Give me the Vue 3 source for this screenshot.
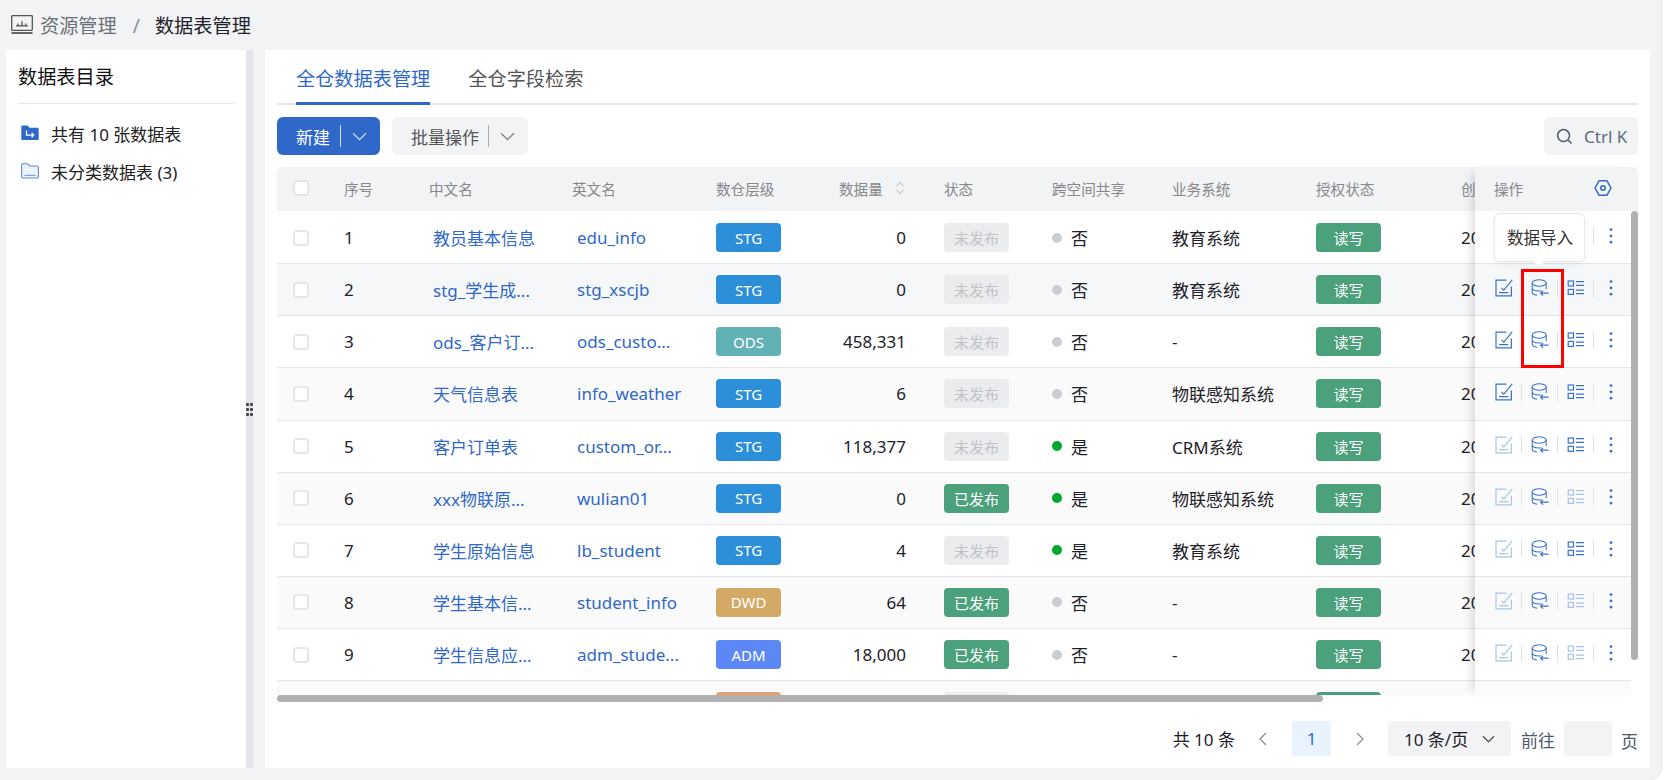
<script setup>
import { ref } from 'vue'

const activeTab = ref(0)
const tabs = ['全仓数据表管理', '全仓字段检索']

const headers = [
  { label: '' },
  { label: '序号' },
  { label: '中文名' },
  { label: '英文名' },
  { label: '数仓层级' },
  { label: '数据量', sort: true },
  { label: '状态' },
  { label: '跨空间共享' },
  { label: '业务系统' },
  { label: '授权状态' },
  { label: '创建时间' }
]

const rows = [
  { id: 1, cn: '教员基本信息', en: 'edu_info', tier: 'STG', count: '0', published: false, shared: false, biz: '教育系统', edit: true, list: true },
  { id: 2, cn: 'stg_学生成...', en: 'stg_xscjb', tier: 'STG', count: '0', published: false, shared: false, biz: '教育系统', edit: true, list: true },
  { id: 3, cn: 'ods_客户订...', en: 'ods_custo...', tier: 'ODS', count: '458,331', published: false, shared: false, biz: '-', edit: true, list: true },
  { id: 4, cn: '天气信息表', en: 'info_weather', tier: 'STG', count: '6', published: false, shared: false, biz: '物联感知系统', edit: true, list: true },
  { id: 5, cn: '客户订单表', en: 'custom_or...', tier: 'STG', count: '118,377', published: false, shared: true, biz: 'CRM系统', edit: false, list: true },
  { id: 6, cn: 'xxx物联原...', en: 'wulian01', tier: 'STG', count: '0', published: true, shared: true, biz: '物联感知系统', edit: false, list: false },
  { id: 7, cn: '学生原始信息', en: 'lb_student', tier: 'STG', count: '4', published: false, shared: true, biz: '教育系统', edit: false, list: true },
  { id: 8, cn: '学生基本信...', en: 'student_info', tier: 'DWD', count: '64', published: true, shared: false, biz: '-', edit: false, list: false },
  { id: 9, cn: '学生信息应...', en: 'adm_stude...', tier: 'ADM', count: '18,000', published: true, shared: false, biz: '-', edit: false, list: false },
  { id: 10, cn: '', en: '', tier: 'DM', count: '', published: false, shared: false, biz: '', edit: false, list: false }
]
</script>

<template>
  <div class="page">
    <!-- 面包屑 -->
    <div class="breadcrumb">
      <svg class="crumb-icon" viewBox="0 0 22 20" fill="none" stroke="#555" stroke-width="1.3">
        <rect x="0.7" y="0.7" width="20.6" height="14.6" rx="0.5" />
        <path d="M5 10.8h12M7.2 10.5V8.6M11 10.5V6.2M14.8 10.5V8.6" />
        <path d="M0.5 18h21" stroke-width="1.8" />
      </svg>
      <span class="crumb-parent">资源管理</span>
      <span class="crumb-sep">/</span>
      <span class="crumb-current">数据表管理</span>
    </div>

    <div class="content">
      <!-- 左侧目录 -->
      <aside class="sidebar">
        <div class="sidebar-title">数据表目录</div>
        <div class="tree-item">
          <svg class="folder" viewBox="0 0 18 16">
            <path d="M1.5 0.5h5l2 2.2h8a1.2 1.2 0 0 1 1.2 1.2v10a1.2 1.2 0 0 1-1.2 1.2h-15a1.2 1.2 0 0 1-1.2-1.2V1.7a1.2 1.2 0 0 1 1.2-1.2z" fill="#2f68c8" />
            <path d="M5.5 5.5v4.6h7M10.6 8l2.1 2.1-2.1 2.1" fill="none" stroke="#fff" stroke-width="1.3" />
          </svg>
          <span>共有 10 张数据表</span>
        </div>
        <div class="tree-item">
          <svg class="folder" viewBox="0 0 18 16">
            <path d="M1.8 0.8h4.8l2 2.2h7.6a1.2 1.2 0 0 1 1.2 1.2v9.6a1.2 1.2 0 0 1-1.2 1.2H1.8a1.2 1.2 0 0 1-1.2-1.2V2a1.2 1.2 0 0 1 1.2-1.2z" fill="#eef3fb" stroke="#5f8ed6" stroke-width="1.1" />
            <path d="M3.5 12.3h11" stroke="#5f8ed6" stroke-width="1" />
          </svg>
          <span>未分类数据表 (3)</span>
        </div>
      </aside>

      <!-- 拖拽条 -->
      <div class="splitter">
        <div class="splitter-bar">
          <div class="grip">
            <i v-for="n in 6" :key="n"></i>
          </div>
        </div>
      </div>

      <!-- 主区域 -->
      <main class="main">
        <div class="tabs">
          <div
            v-for="(tab, i) in tabs"
            :key="tab"
            class="tab"
            :class="{ active: activeTab === i }"
            @click="activeTab = i"
          >
            {{ tab }}
          </div>
        </div>

        <div class="toolbar">
          <button class="btn btn-primary">
            <span class="btn-label">新建</span>
            <span class="btn-line"></span>
            <svg class="btn-arrow" viewBox="0 0 14 8" fill="none" stroke="currentColor" stroke-width="1.2"><path d="M1 1l6 6 6-6" /></svg>
          </button>
          <button class="btn btn-gray">
            <span class="btn-label">批量操作</span>
            <span class="btn-line"></span>
            <svg class="btn-arrow" viewBox="0 0 14 8" fill="none" stroke="currentColor" stroke-width="1.2"><path d="M1 1l6 6 6-6" /></svg>
          </button>
          <div class="search">
            <svg class="search-icon" viewBox="0 0 18 18" fill="none" stroke="#4e5969" stroke-width="1.6">
              <circle cx="8" cy="8" r="6.3" />
              <path d="M12.8 12.8l3.6 3.6" />
            </svg>
            <span>Ctrl K</span>
          </div>
        </div>

        <div class="table">
          <div class="table-inner">
            <!-- 可滚动部分 -->
            <div class="table-left">
              <div class="grid-row head">
                <div v-for="(h, i) in headers" :key="i" class="th">
                  <span v-if="i === 0" class="checkbox"></span>
                  <template v-else>{{ h.label }}</template>
                  <svg v-if="h.sort" class="sort" viewBox="0 0 10 14" fill="none" stroke="#c9cdd4" stroke-width="1.1">
                    <path d="M1.5 5L5 1.5 8.5 5M1.5 9L5 12.5 8.5 9" />
                  </svg>
                </div>
              </div>
              <div class="table-body">
                <div
                  v-for="(row, idx) in rows"
                  :key="row.id"
                  class="grid-row data"
                  :class="{ stripe: idx % 2 === 1, hovered: idx === 1 }"
                >
                  <div class="td"><span class="checkbox"></span></div>
                  <div class="td seq">{{ row.id }}</div>
                  <div class="td link cn">{{ row.cn }}</div>
                  <div class="td link en">{{ row.en }}</div>
                  <div class="td"><span class="tag" :class="'tier-' + row.tier">{{ row.tier }}</span></div>
                  <div class="td num">{{ row.count }}</div>
                  <div class="td">
                    <span class="tag" :class="row.published ? 'tag-green' : 'tag-off'">{{ row.published ? '已发布' : '未发布' }}</span>
                  </div>
                  <div class="td share">
                    <i class="dot" :class="{ on: row.shared }"></i>
                    <span>{{ row.shared ? '是' : '否' }}</span>
                  </div>
                  <div class="td">{{ row.biz }}</div>
                  <div class="td"><span class="tag tag-green">读写</span></div>
                  <div class="td">2023-10-12 10:00</div>
                </div>
              </div>
            </div>

            <!-- 固定操作列 -->
            <div class="table-fixed">
              <div class="fixed-head">
                <span>操作</span>
                <svg class="gear" viewBox="0 0 18 18" fill="none" stroke="#2f68c8" stroke-width="1.5">
                  <path d="M5 1.8h8L17 9l-4 7.2H5L1 9z" stroke-linejoin="round" />
                  <circle cx="9" cy="9" r="2.2" />
                </svg>
              </div>
              <div class="fixed-body">
                <div class="fixed-rows">
                  <div
                    v-for="(row, idx) in rows"
                    :key="row.id"
                    class="op-row"
                    :class="{ stripe: idx % 2 === 1, hovered: idx === 1 }"
                  >
                    <div class="op">
                      <svg class="op-icon" :class="{ light: !row.edit }" viewBox="0 0 18 18" fill="none" stroke="currentColor" stroke-width="1.2">
                        <path d="M11.5 1.2H1v15.6h15.4V7.5" />
                        <path d="M6.6 8.8l2.2 2.4L17.2 0.8M4.2 13.7h9" />
                      </svg>
                      <i class="op-line"></i>
                    </div>
                    <div class="op">
                      <svg class="op-icon" viewBox="0 0 18 18" fill="none" stroke="currentColor" stroke-width="1.05">
                        <ellipse cx="8.2" cy="4" rx="7" ry="3.2" />
                        <path d="M1.2 4v9c0 1.7 2.2 2.9 5 3.2M1.2 8.8c0 1.8 3.1 3.1 7 3.1 .8 0 1.6-.1 2.3-.2M15.2 4v6" />
                        <path d="M17.6 14.2H9.6M12 11.8l-2.4 2.4 2.4 2.4" stroke-width="1.2" />
                      </svg>
                      <i class="op-line"></i>
                    </div>
                    <div class="op">
                      <svg class="op-icon" :class="{ light: !row.list }" viewBox="0 0 18 18" fill="none" stroke="currentColor" stroke-width="1.2">
                        <rect x="1.2" y="2" width="5.3" height="5" />
                        <rect x="1.2" y="10.4" width="5.3" height="5" />
                        <path d="M9 2.7h8M9 6.3h8M9 11.1h8M9 14.7h8" />
                      </svg>
                      <i class="op-line"></i>
                    </div>
                    <div class="op">
                      <svg class="op-icon" viewBox="0 0 18 18" fill="currentColor">
                        <circle cx="8" cy="2.6" r="1.4" />
                        <circle cx="8" cy="8.9" r="1.4" />
                        <circle cx="8" cy="15.2" r="1.4" />
                      </svg>
                    </div>
                  </div>
                </div>
                <div class="vtrack"><div class="vthumb"></div></div>
              </div>

              <!-- 提示 -->
              <div class="tooltip">数据导入</div>
              <!-- 红框标注 -->
              <div class="red-box"></div>
            </div>
          </div>
          <div class="hbar"><div class="hthumb"></div></div>
        </div>

        <!-- 分页 -->
        <div class="pager">
          <span class="total">共 10 条</span>
          <svg class="pg-arrow" viewBox="0 0 8 14" fill="none" stroke="#86909c" stroke-width="1.3"><path d="M7 1L1 7l6 6" /></svg>
          <span class="pg-num">1</span>
          <svg class="pg-arrow" viewBox="0 0 8 14" fill="none" stroke="#86909c" stroke-width="1.3"><path d="M1 1l6 6-6 6" /></svg>
          <div class="pg-size">
            <span>10 条/页</span>
            <svg viewBox="0 0 14 8" fill="none" stroke="#4e5969" stroke-width="1.4"><path d="M1 1l6 6 6-6" /></svg>
          </div>
          <span class="pg-goto">前往</span>
          <span class="pg-input"></span>
          <span class="pg-unit">页</span>
        </div>
      </main>
    </div>
  </div>
</template>

<style scoped>
.page {
  width: 1662px;
  height: 780px;
  box-sizing: border-box;
  display: flex;
  flex-direction: column;
  background: #f2f3f5;
  border-right: 1px solid #e2e3e7;
  border-bottom-right-radius: 12px;
  font-family: "Noto Sans", "Noto Sans CJK SC", sans-serif;
  font-size: 17px;
  color: #1d2129;
}

/* 面包屑 */
.breadcrumb {
  height: 50px;
  flex: none;
  display: flex;
  align-items: center;
  padding-left: 11px;
  font-size: 19.2px;
}

.crumb-icon {
  width: 22px;
  height: 20px;
  margin-right: 7px;
}

.crumb-parent {
  color: #6b6f76;
}

.crumb-sep {
  color: #86909c;
  margin: 0 15px 0 16px;
}

.crumb-current {
  color: #1d2129;
}

.content {
  flex: 1;
  min-height: 0;
  display: flex;
  padding: 0 11px 12px 6px;
}

/* 左侧目录 */
.sidebar {
  width: 240px;
  flex: none;
  box-sizing: border-box;
  background: #fff;
  padding: 0 12px;
}

.sidebar-title {
  height: 54px;
  box-sizing: border-box;
  padding-top: 13px;
  line-height: 28px;
  font-size: 19.2px;
  color: #111;
  border-bottom: 1px solid #e5e6eb;
  margin-bottom: 10px;
}

.tree-item {
  height: 38px;
  display: flex;
  align-items: center;
  padding-left: 3px;
  color: #222;
}

.folder {
  width: 18px;
  height: 16px;
  margin-right: 12px;
  flex: none;
}

/* 拖拽条 */
.splitter {
  width: 19px;
  flex: none;
}

.splitter-bar {
  width: 7px;
  height: 100%;
  background: #e4e5ea;
  display: flex;
  align-items: center;
}

.grip {
  display: grid;
  grid-template-columns: 3px 3px;
  gap: 2px 1px;
}

.grip i {
  width: 3px;
  height: 3px;
  background: #444;
  border-radius: 1px;
}

/* 主区域 */
.main {
  flex: 1;
  min-width: 0;
  background: #fff;
  padding: 0 12px;
  display: flex;
  flex-direction: column;
}

.tabs {
  height: 55px;
  flex: none;
  box-sizing: border-box;
  display: flex;
  padding-left: 19px;
  gap: 38px;
  border-bottom: 2px solid #e5e6eb;
}

.tab {
  height: 55px;
  box-sizing: border-box;
  padding-top: 13px;
  line-height: 32px;
  font-size: 19.2px;
  color: #555;
  cursor: pointer;
}

.tab.active {
  color: #2f68c8;
  border-bottom: 3px solid #2f68c8;
}

.toolbar {
  flex: none;
  display: flex;
  align-items: center;
  gap: 12px;
  margin-top: 12px;
}

.btn {
  height: 38px;
  border: none;
  border-radius: 6px;
  display: flex;
  align-items: center;
  font-family: inherit;
  font-size: 17px;
  padding: 0 0 0 19px;
}

.btn-primary {
  width: 103px;
  background: #2f68c8;
  color: #fff;
}

.btn-gray {
  width: 136px;
  background: #f2f3f5;
  color: #555;
}

.btn-line {
  width: 1px;
  height: 22px;
  background: currentColor;
  opacity: 0.45;
  margin-left: 10px;
}

.btn-gray .btn-line {
  margin-left: 9px;
}

.btn-primary .btn-line {
  opacity: 0.8;
}

.btn-arrow {
  width: 15px;
  height: 9px;
  margin-left: 11px;
  opacity: 0.75;
}

.search {
  margin-left: auto;
  width: 94px;
  height: 38px;
  box-sizing: border-box;
  border-radius: 6px;
  background: #f2f3f5;
  display: flex;
  align-items: center;
  padding-left: 12px;
  color: #5a6b82;
}

.search-icon {
  width: 17px;
  height: 17px;
  margin-right: 11px;
}

/* 表格 */
.table {
  flex: none;
  margin-top: 12px;
  height: 535px;
  display: flex;
  flex-direction: column;
}

.table-inner {
  height: 528px;
  display: flex;
}

.table-left {
  flex: 1;
  min-width: 0;
  overflow: hidden;
}

.grid-row {
  display: grid;
  grid-template-columns: 67px 85px 143px 144px 123px 105px 108px 120px 144px 145px 200px;
  width: 1284px;
}

.head {
  height: 44px;
  background: #f2f3f5;
  border-top-left-radius: 6px;
}

.th {
  display: flex;
  align-items: center;
  padding-bottom: 2px;
  box-sizing: border-box;
  font-size: 14.6px;
  color: #86888c;
  white-space: nowrap;
}

.th .checkbox,
.td .checkbox {
  margin-left: 16px;
}

.sort {
  width: 10px;
  height: 14px;
  margin-left: 12px;
}

.table-body {
  height: 484px;
  box-sizing: border-box;
  padding-top: 1px;
  overflow: hidden;
}

.data {
  height: 52.14px;
  box-sizing: border-box;
  border-bottom: 1px solid #e5e6eb;
  background: #fff;
}

.stripe {
  background: #fafafa;
}

.hovered {
  background: #f6f7f9;
}

.td {
  display: flex;
  align-items: center;
  white-space: nowrap;
  color: #1d2129;
}

.checkbox {
  width: 16px;
  height: 16px;
  box-sizing: border-box;
  border: 2px solid #e5e6eb;
  border-radius: 4px;
  background: #fff;
  flex: none;
}

.link {
  color: #2f68c8;
}

.cn {
  padding-left: 4px;
}

.en {
  padding-left: 5px;
}

.num {
  justify-content: flex-end;
  padding-right: 38px;
}

.tag {
  width: 65px;
  height: 29px;
  border-radius: 4px;
  display: flex;
  align-items: center;
  justify-content: center;
  font-size: 15px;
  color: #fff;
}

.tier-STG {
  background: #2b90d9;
}

.tier-ODS {
  background: #62b1b4;
}

.tier-DWD {
  background: #d2aa66;
}

.tier-ADM {
  background: #5b87f7;
}

.tier-DM {
  background: #e8a070;
}

.tag-green {
  background: #4ba17b;
}

.tag-off {
  background: #ebecee;
  color: #bfc3c9;
}

.share {
  gap: 9px;
}

.dot {
  width: 10px;
  height: 10px;
  border-radius: 50%;
  background: #c9cdd4;
  flex: none;
}

.dot.on {
  background: #00a82d;
}

/* 固定列 */
.table-fixed {
  width: 163px;
  flex: none;
  position: relative;
  background: #fff;
  box-shadow: -8px 0 10px -6px rgba(0, 0, 0, 0.16);
}

.fixed-head {
  height: 44px;
  box-sizing: border-box;
  padding: 0 26px 2px 19px;
  display: flex;
  align-items: center;
  justify-content: space-between;
  background: #f2f3f5;
  border-top-right-radius: 6px;
  font-size: 14.6px;
  color: #86888c;
}

.gear {
  width: 18px;
  height: 18px;
}

.fixed-body {
  height: 484px;
  display: flex;
}

.fixed-rows {
  flex: 1;
  min-width: 0;
  box-sizing: border-box;
  padding-top: 1px;
  overflow: hidden;
}

.op-row {
  height: 52.14px;
  box-sizing: border-box;
  border-bottom: 1px solid #e5e6eb;
  padding: 0 0 3px 20px;
  display: flex;
  align-items: center;
}

.op {
  width: 36px;
  flex: none;
  display: flex;
  align-items: center;
  color: #3b72c9;
}

.op-icon {
  width: 18px;
  height: 18px;
  flex: none;
}

.op-icon.light {
  color: #a9c4ec;
}

.op-line {
  width: 1px;
  height: 17px;
  background: #dfe1e6;
  margin-left: 8px;
}

.vtrack {
  width: 7px;
  flex: none;
}

.vthumb {
  height: 449px;
  background: #b0b0b0;
  border-radius: 4px;
}

.tooltip {
  position: absolute;
  left: 19px;
  top: 46px;
  width: 91px;
  height: 49px;
  box-sizing: border-box;
  padding-left: 12px;
  line-height: 47px;
  font-size: 16.5px;
  background: #fff;
  border: 1px solid #e8e9ec;
  border-radius: 6px;
  box-shadow: 0 2px 8px rgba(0, 0, 0, 0.06);
  color: #333;
  z-index: 2;
}

.tooltip::after {
  content: '';
  position: absolute;
  left: 39px;
  bottom: -5px;
  width: 9px;
  height: 9px;
  background: #fff;
  transform: rotate(45deg);
  border-right: 1px solid #e8e9ec;
  border-bottom: 1px solid #e8e9ec;
}

.red-box {
  position: absolute;
  left: 46px;
  top: 102px;
  width: 43px;
  height: 99px;
  box-sizing: border-box;
  border: 3px solid #f00;
  z-index: 3;
}

.hbar {
  height: 7px;
}

.hthumb {
  width: 1046px;
  height: 7px;
  background: #b0b0b0;
  border-radius: 4px;
}

/* 分页 */
.pager {
  flex: none;
  margin-top: 19px;
  height: 35px;
  display: flex;
  align-items: center;
  justify-content: flex-end;
  color: #1d2129;
}

.total {
  margin-right: 24px;
}

.pg-arrow {
  width: 8px;
  height: 14px;
}

.pg-num {
  width: 39px;
  height: 35px;
  margin: 0 25px;
  background: #e8f3ff;
  color: #2f68c8;
  display: flex;
  align-items: center;
  justify-content: center;
}

.pg-size {
  width: 123px;
  height: 35px;
  box-sizing: border-box;
  margin-left: 24px;
  padding: 0 16px;
  background: #f2f3f5;
  display: flex;
  align-items: center;
  justify-content: space-between;
  border-radius: 4px 4px 0 0;
}

.pg-size svg {
  width: 13px;
  height: 8px;
}

.pg-goto {
  margin: 2px 9px 0 10px;
  color: #4e5969;
}

.pg-input {
  width: 48px;
  height: 35px;
  background: #f2f3f5;
  border-radius: 4px 4px 0 0;
}

.pg-unit {
  margin: 4px 0 0 9px;
  color: #4e5969;
}
</style>

<style>
html,
body {
  margin: 0;
  background: #fff;
  overflow: hidden;
}
</style>
